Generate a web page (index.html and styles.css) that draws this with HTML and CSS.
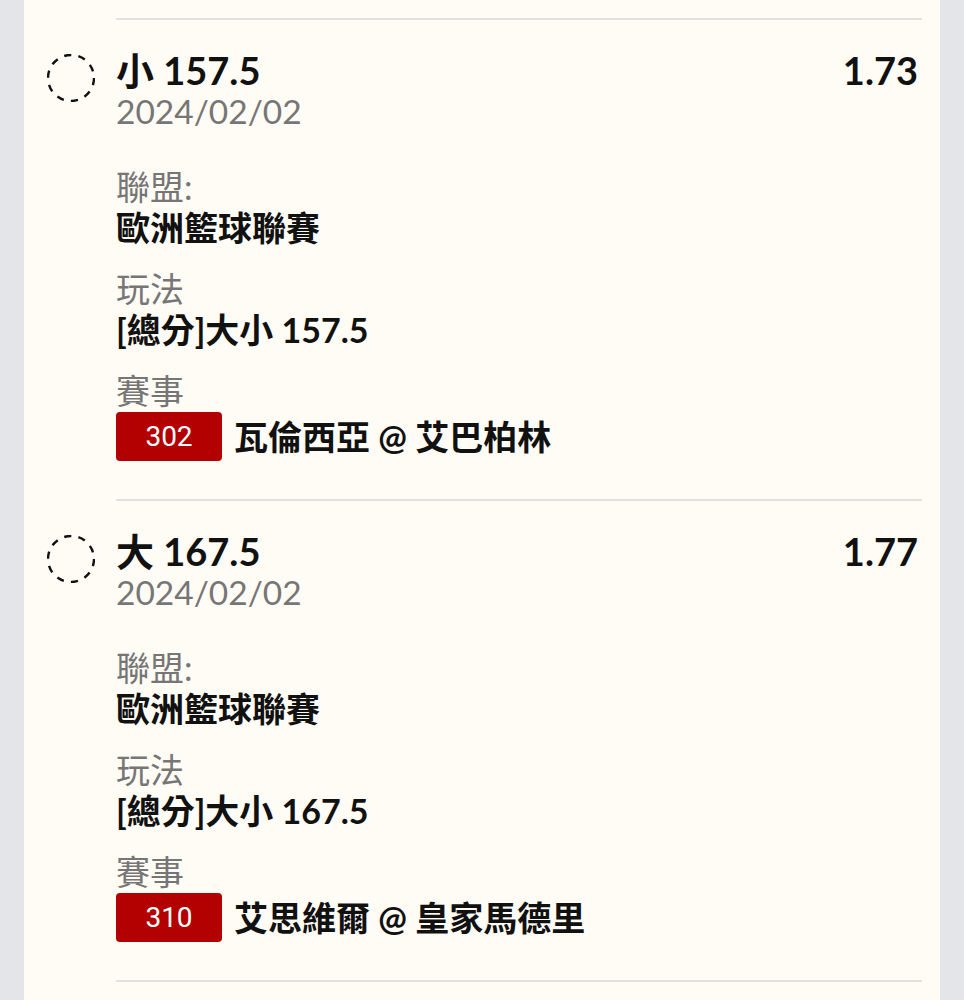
FILE: index.html
```html
<!DOCTYPE html>
<html lang="zh-Hant">
<head>
    <meta charset="UTF-8">
    <meta name="viewport" content="width=device-width, initial-scale=1.0">
    <title>投注選項</title>
    <link rel="stylesheet" href="styles.css">
</head>
<body>
    <div id="card">
        <div class="bet">
            <div class="bet-check">
                <svg width="48" height="48" viewBox="0 0 48 48">
                    <circle cx="24" cy="24" r="23" fill="none" stroke="#111" stroke-width="2.4" stroke-dasharray="7.2 7.2"/>
                </svg>
            </div>
            <div class="bet-main">
                <div class="bet-head">
                    <div>
                        <div class="bet-title">小 157.5</div>
                        <div class="bet-date">2024/02/02</div>
                    </div>
                    <div class="bet-odds">1.73</div>
                </div>
                <div class="field">
                    <div class="field-label">聯盟:</div>
                    <div class="field-value">歐洲籃球聯賽</div>
                </div>
                <div class="field">
                    <div class="field-label">玩法</div>
                    <div class="field-value">[總分]大小 157.5</div>
                </div>
                <div class="field">
                    <div class="field-label">賽事</div>
                    <div class="match">
                        <span class="match-no">302</span>
                        <span class="field-value">瓦倫西亞 @ 艾巴柏林</span>
                    </div>
                </div>
            </div>
        </div>

        <div class="bet">
            <div class="bet-check">
                <svg width="48" height="48" viewBox="0 0 48 48">
                    <circle cx="24" cy="24" r="23" fill="none" stroke="#111" stroke-width="2.4" stroke-dasharray="7.2 7.2"/>
                </svg>
            </div>
            <div class="bet-main">
                <div class="bet-head">
                    <div>
                        <div class="bet-title">大 167.5</div>
                        <div class="bet-date">2024/02/02</div>
                    </div>
                    <div class="bet-odds">1.77</div>
                </div>
                <div class="field">
                    <div class="field-label">聯盟:</div>
                    <div class="field-value">歐洲籃球聯賽</div>
                </div>
                <div class="field">
                    <div class="field-label">玩法</div>
                    <div class="field-value">[總分]大小 167.5</div>
                </div>
                <div class="field">
                    <div class="field-label">賽事</div>
                    <div class="match">
                        <span class="match-no">310</span>
                        <span class="field-value">艾思維爾 @ 皇家馬德里</span>
                    </div>
                </div>
            </div>
        </div>

        <div class="bet">
            <div class="bet-check"></div>
            <div class="bet-main"></div>
        </div>
    </div>
</body>
</html>
```

FILE: styles.css
```css
* {
    margin: 0;
    padding: 0;
    box-sizing: border-box;
}

body {
    background-color: #e4e5e8;
    font-family: 'Lato', 'Noto Sans CJK TC', sans-serif;
    color: #111;
}

#card {
    width: 916px;
    margin-left: 24px;
    background-color: #fefcf4;
    padding: 18px 18px 0 0;
    min-height: 1000px;
}

.bet {
    display: flex;
}

.bet-check {
    width: 92px;
    flex-shrink: 0;
    padding: 36px 0 0 23px;
}

.bet-check svg {
    display: block;
}

.bet-main {
    flex: 1;
    border-top: 2px solid #e3e1db;
    padding: 29px 0 38px;
    min-height: 40px;
}

.bet-head {
    display: flex;
    justify-content: space-between;
    align-items: flex-start;
    padding-right: 4px;
    margin-bottom: 34px;
}

.bet-title {
    font-size: 38px;
    font-weight: 700;
    line-height: 42px;
}

.bet-odds {
    font-size: 38px;
    font-weight: 700;
    line-height: 42px;
}

.bet-date {
    font-size: 33.5px;
    line-height: 41px;
    color: #767676;
}

.field {
    margin-bottom: 20px;
}

.field:last-child {
    margin-bottom: 0;
}

.field-label {
    font-size: 34px;
    line-height: 41px;
    color: #767676;
}

.field-value {
    font-size: 34px;
    font-weight: 700;
    line-height: 41px;
}

.match {
    display: flex;
    align-items: center;
    gap: 12px;
    margin-top: 1px;
}

.match-no {
    width: 106px;
    height: 49px;
    border-radius: 4px;
    background-color: #b30000;
    color: #fff;
    font-family: 'Roboto', sans-serif;
    font-size: 28px;
    display: flex;
    align-items: center;
    justify-content: center;
}
```
